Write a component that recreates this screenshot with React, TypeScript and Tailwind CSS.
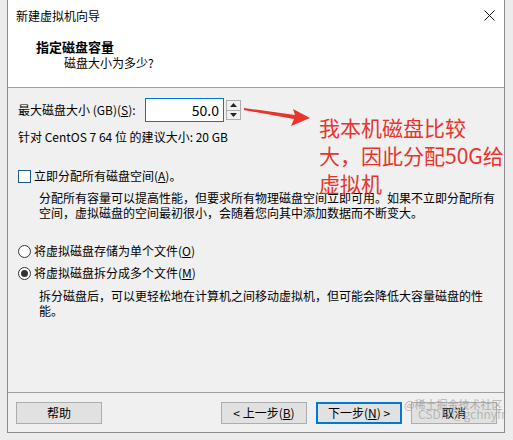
import { useState } from "react";

const font = "font-['Noto_Sans_CJK_SC',sans-serif]";

function WinButton({ text, primary }: { text: React.ReactNode; primary?: boolean }) {
  return (
    <button
      className={`flex h-[22px] w-[86px] items-center justify-center bg-[#e1e1e1] text-[12px] leading-none text-black ${
        primary ? "border-2 border-[#0078d7]" : "border border-[#adadad]"
      }`}
    >
      {text}
    </button>
  );
}

function Radio({ checked }: { checked?: boolean }) {
  return (
    <span className="flex h-[13px] w-[13px] shrink-0 items-center justify-center rounded-full border border-[#333] bg-white">
      {checked && <span className="h-[7px] w-[7px] rounded-full bg-[#333]" />}
    </span>
  );
}

export default function App() {
  const [size] = useState("50.0");

  return (
    <div className={`relative h-[440px] w-[513px] bg-[#ececec] pb-[7px] pl-[7px] pr-[8px] ${font}`}>
      <div className="flex h-full flex-col border-x border-b border-[#8c8c8c] bg-[#f0f0f0]">
        {/* title + header */}
        <div className="bg-white">
          <div className="flex h-[31px] items-center justify-between pl-[8px] pr-[9px]">
            <span className="text-[12px] text-black">新建虚拟机向导</span>
            <svg width="11" height="11" viewBox="0 0 11 11" className="mt-[-1px]">
              <path d="M0.5 0.5 L10.5 10.5 M10.5 0.5 L0.5 10.5" stroke="#111" strokeWidth="1" />
            </svg>
          </div>
          <div className="h-[56px] pt-[8px] leading-[16px] text-black">
            <div className="pl-[28px] text-[13px] font-bold">指定磁盘容量</div>
            <div className="pl-[56px] text-[12px]">磁盘大小为多少?</div>
          </div>
        </div>
        <div className="h-px bg-[#a0a0a0]" />

        {/* content */}
        <div className="flex flex-1 flex-col pl-[10px] pt-[10px] text-[12px] text-black">
          <div className="flex items-center">
            <span className="w-[127px] leading-[16px]">
              最大磁盘大小 (GB)(<span className="underline">S</span>):
            </span>
            <div className="flex h-[24px] w-[79px] items-center justify-end border border-[#0078d7] bg-white pr-[4px] text-[14px]">
              {size}
            </div>
            <div className="ml-[2px] flex h-[20px] w-[15px] flex-col border border-[#adadad] bg-[#f0f0f0]">
              <div className="flex flex-1 items-center justify-center border-b border-[#adadad]">
                <svg width="7" height="4" viewBox="0 0 7 4">
                  <path d="M0 4 L3.5 0 L7 4 Z" fill="#222" />
                </svg>
              </div>
              <div className="flex flex-1 items-center justify-center">
                <svg width="7" height="4" viewBox="0 0 7 4">
                  <path d="M0 0 L3.5 4 L7 0 Z" fill="#222" />
                </svg>
              </div>
            </div>
          </div>
          <div className="mt-[7px] leading-[16px]">针对 CentOS 7 64 位 的建议大小: 20 GB</div>

          <div className="mt-[23px] flex items-center gap-[3px] leading-[16px]">
            <span className="h-[13px] w-[13px] border border-[#1b5a96] bg-white" />
            <span>
              立即分配所有磁盘空间(<span className="underline">A</span>)。
            </span>
          </div>
          <div className="mt-[6px] pl-[21px] leading-[15px]">
            分配所有容量可以提高性能，但要求所有物理磁盘空间立即可用。如果不立即分配所有
            <br />
            空间，虚拟磁盘的空间最初很小，会随着您向其中添加数据而不断变大。
          </div>

          <div className="mt-[23px] flex items-center gap-[3px] leading-[16px]">
            <Radio />
            <span>
              将虚拟磁盘存储为单个文件(<span className="underline">O</span>)
            </span>
          </div>
          <div className="mt-[6px] flex items-center gap-[3px] leading-[16px]">
            <Radio checked />
            <span>
              将虚拟磁盘拆分成多个文件(<span className="underline">M</span>)
            </span>
          </div>
          <div className="mt-[7px] pl-[21px] leading-[15px]">
            拆分磁盘后，可以更轻松地在计算机之间移动虚拟机，但可能会降低大容量磁盘的性
            <br />
            能。
          </div>
        </div>

        {/* footer */}
        <div className="h-px bg-[#a0a0a0]" />
        <div className="flex h-[39px] items-start pl-[8px] pr-[7px] pt-[9px]">
          <WinButton text="帮助" />
          <div className="ml-auto flex gap-[9px]">
            <WinButton
              text={
                <>
                  &lt; 上一步(<span className="underline">B</span>)
                </>
              }
            />
            <WinButton
              primary
              text={
                <>
                  下一步(<span className="underline">N</span>) &gt;
                </>
              }
            />
            <WinButton text="取消" />
          </div>
        </div>
      </div>

      {/* red annotation overlay */}
      <svg className="absolute left-[243px] top-[104px]" width="70" height="26" viewBox="0 0 70 26">
        <path d="M1 4 L52 11 L50 5 L67 14 L48 22 L51 15 L1 6 Z" fill="#e8342c" />
      </svg>
      <div className="absolute left-[319px] top-[113px] text-[21px] leading-[28px] text-[#e8342c]">
        我本机磁盘比较
        <br />
        大，因此分配50G给
        <br />
        虚拟机
      </div>

      {/* watermark */}
      <div className="absolute left-[404px] top-[398px] text-[11px] leading-[12px] text-[#9a9a9a] opacity-70">
        @稀土掘金技术社区
      </div>
      <div className="absolute left-[418px] top-[407px] text-[12px] leading-[13px] text-[#9a9a9a] opacity-60">
        CSDN @gchnyfr
      </div>
    </div>
  );
}
